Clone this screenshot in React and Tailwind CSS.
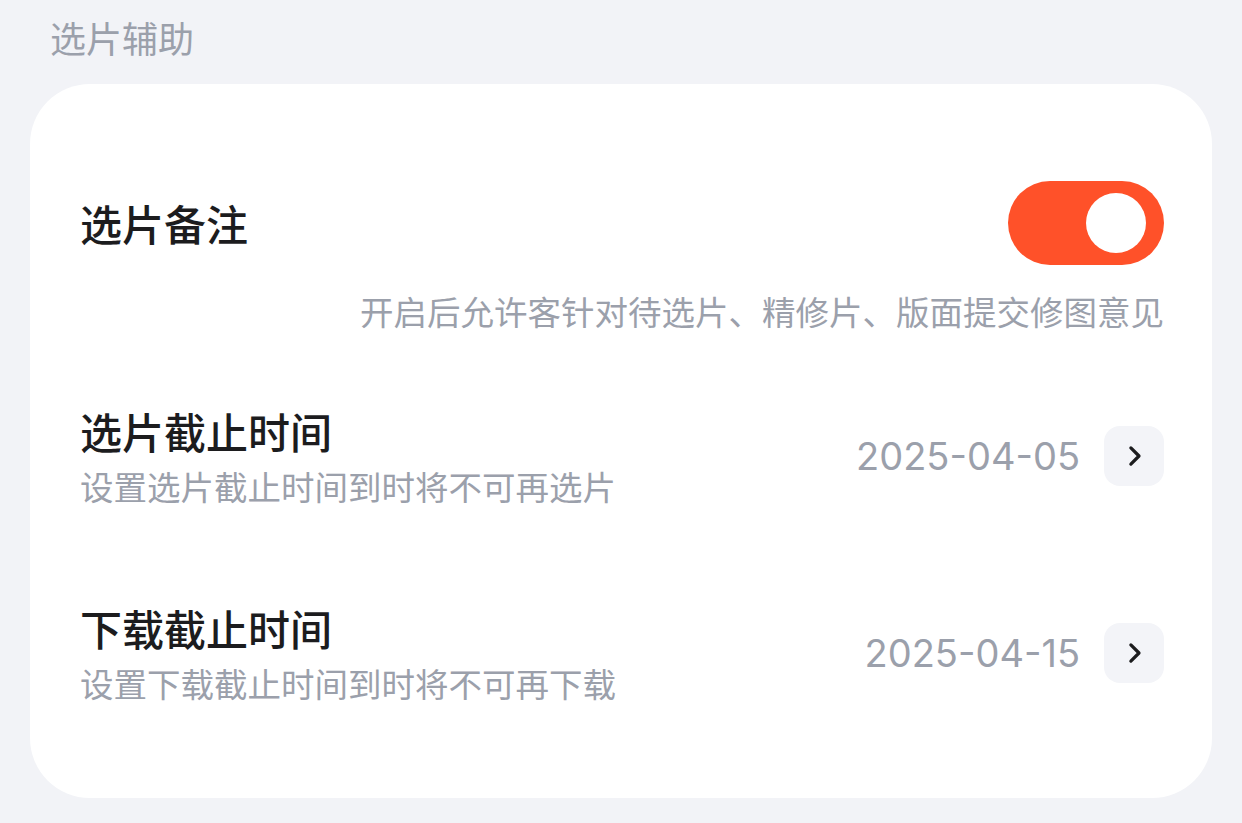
import React from "react";

const cjk = { fontFamily: '"Noto Sans CJK SC", "Noto Sans", sans-serif' };
const num = { fontFamily: 'Inter, "Noto Sans CJK SC", sans-serif' };

function Chevron() {
  return (
    <button className="flex h-[60px] w-[60px] shrink-0 items-center justify-center rounded-[16px] bg-[#f3f4f8]">
      <svg width="30" height="30" viewBox="0 0 24 24" fill="none" stroke="#1c1c1e" strokeWidth="2.6" strokeLinecap="round" strokeLinejoin="round">
        <path d="M9.5 5.5l6.5 6.5-6.5 6.5" />
      </svg>
    </button>
  );
}

function DateRow({ title, sub, date, className }) {
  return (
    <div className={"flex items-center justify-between " + className}>
      <div className="flex flex-col gap-[10px]">
        <div className="text-[42px] leading-[50px] font-medium text-[#1c1c1e]" style={cjk}>{title}</div>
        <div className="text-[33.5px] leading-[40px] text-[#9ba0ab]" style={cjk}>{sub}</div>
      </div>
      <div className="flex items-center gap-[24px]">
        <span className="text-[38px] leading-[44px] text-[#9ba0ab]" style={num}>{date}</span>
        <Chevron />
      </div>
    </div>
  );
}

export default function App() {
  return (
    <div className="min-h-screen w-full bg-[#f2f3f7] px-[30px]">
      <div className="h-[84px] pl-[20px] pt-[17px]">
        <div className="text-[36px] leading-[40px] text-[#9ba0ab]" style={cjk}>选片辅助</div>
      </div>
      <div className="rounded-[60px] bg-white px-[48px] pl-[50px] pt-[97px] pb-[95px]">
        <div className="flex items-center justify-between">
          <div className="text-[42px] leading-[50px] font-medium text-[#1c1c1e]" style={cjk}>选片备注</div>
          <div className="flex h-[84px] w-[156px] items-center justify-end rounded-full bg-[#ff5129] pr-[18px]">
            <div className="h-[60px] w-[60px] rounded-full bg-white" />
          </div>
        </div>
        <div className="mt-[26px] text-right text-[33.5px] leading-[40px] text-[#9ba0ab]" style={cjk}>
          开启后允许客针对待选片、精修片、版面提交修图意见
        </div>
        <DateRow className="mt-[75px]" title="选片截止时间" sub="设置选片截止时间到时将不可再选片" date="2025-04-05" />
        <DateRow className="mt-[97px]" title="下载截止时间" sub="设置下载截止时间到时将不可再下载" date="2025-04-15" />
      </div>
    </div>
  );
}
